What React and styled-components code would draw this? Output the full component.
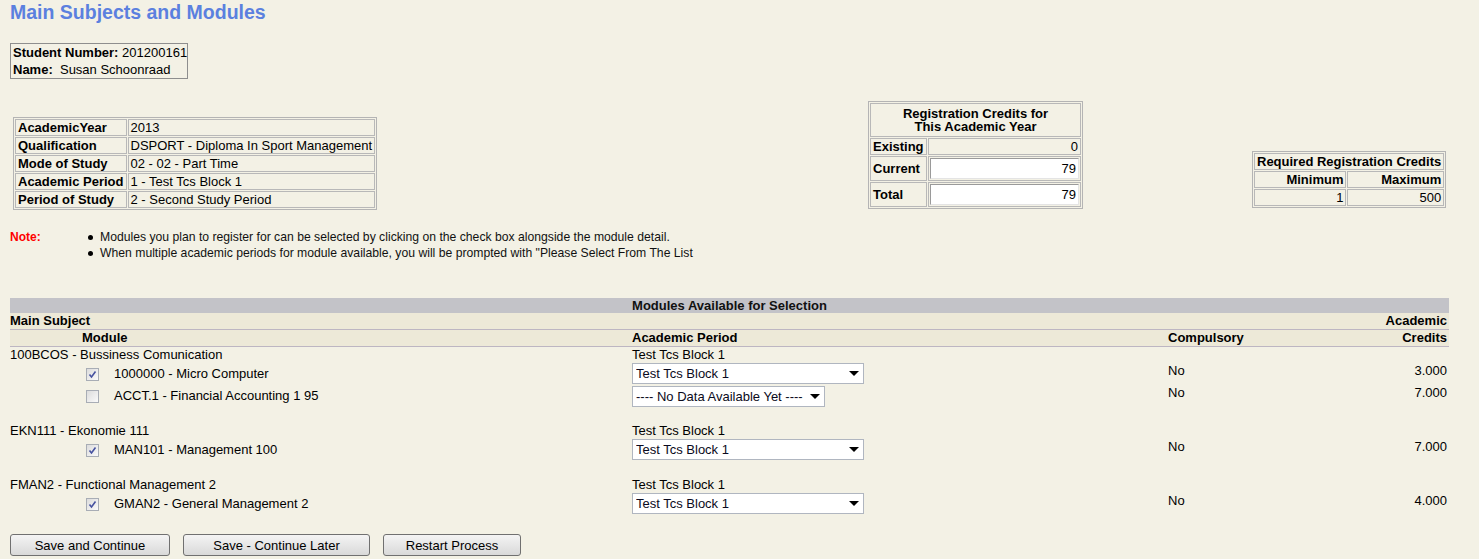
import React from 'react';
import styled, { createGlobalStyle } from 'styled-components';

/* ─── Data ──────────────────────────────────────────────────────────── */

const INFO = [
  ['AcademicYear', '2013'],
  ['Qualification', 'DSPORT - Diploma In Sport Management'],
  ['Mode of Study', '02 - 02 - Part Time'],
  ['Academic Period', '1 - Test Tcs Block 1'],
  ['Period of Study', '2 - Second Study Period'],
];

const NOTES = [
  'Modules you plan to register for can be selected by clicking on the check box alongside the module detail.',
  'When multiple academic periods for module available, you will be prompted with "Please Select From The List',
];

const SUBJECTS = [
  {
    name: '100BCOS - Bussiness Comunication',
    period: 'Test Tcs Block 1',
    modules: [
      { name: '1000000 - Micro Computer', checked: true, option: 'Test Tcs Block 1', width: 232, credits: '3.000' },
      { name: 'ACCT.1 - Financial Accounting 1 95', checked: false, option: '---- No Data Available Yet ----', width: 193, credits: '7.000' },
    ],
  },
  {
    name: 'EKN111 - Ekonomie 111',
    period: 'Test Tcs Block 1',
    modules: [
      { name: 'MAN101 - Management 100', checked: true, option: 'Test Tcs Block 1', width: 232, credits: '7.000' },
    ],
  },
  {
    name: 'FMAN2 - Functional Management 2',
    period: 'Test Tcs Block 1',
    modules: [
      { name: 'GMAN2 - General Management 2', checked: true, option: 'Test Tcs Block 1', width: 232, credits: '4.000' },
    ],
  },
];

const BUTTONS = [
  { label: 'Save and Continue', width: 160 },
  { label: 'Save - Continue Later', width: 187 },
  { label: 'Restart Process', width: 138 },
];

/* ─── Styled components ──────────────────────────────────────────────── */

const GlobalStyle = createGlobalStyle`
  html, body {
    margin: 0;
    padding: 0;
    background: #F3F1E5;
  }
  body {
    font-family: "Liberation Sans", Arial, sans-serif;
    font-size: 13px;
    color: #000;
  }
`;

const Page = styled.div`
  width: 1479px;
  height: 559px;
  overflow: hidden;
  padding-left: 10px;
  box-sizing: border-box;
`;

const Title = styled.h1`
  margin: 0;
  padding-top: 1px;
  font-size: 19.5px;
  line-height: 22px;
  font-weight: bold;
  color: #5B80DF;
`;

const StudentBox = styled.div`
  margin-top: 20px;
  width: 178px;
  box-sizing: border-box;
  border: 1px solid #8E8E8E;
  padding: 0 2px;
  line-height: 17px;
  white-space: nowrap;
`;

const Bold = styled.b`
  font-weight: bold;
`;

const TopRow = styled.div`
  margin-top: 22px;
  display: grid;
  grid-template-columns: 858px 384px auto;
  align-items: start;
`;

const GridTable = styled.table`
  border-collapse: separate;
  border-spacing: 1px;
  border: 1px solid #B4B4B4;
  margin-top: ${p => p.top || 0}px;
  margin-left: ${p => p.left || 0}px;
  width: ${p => p.width}px;
  font-size: 13px;

  td, th {
    border: 1px solid #B8B8B8;
    padding: 0 2px;
    line-height: 15px;
    white-space: nowrap;
  }
`;

const LabelCell = styled.td`
  font-weight: bold;
  width: ${p => p.width || 'auto'};
`;

const HeadCell = styled.th`
  font-weight: bold;
  text-align: ${p => p.align || 'center'};
  && {
    line-height: ${p => p.lh || 15}px;
    padding: ${p => p.pad || '0 2px'};
  }
`;

const NumCell = styled.td`
  text-align: right;
  && {
    padding: ${p => p.pad || '0 2px'};
  }
`;

const CreditInput = styled.input`
  display: block;
  width: 100%;
  height: 21px;
  box-sizing: border-box;
  border: 1px solid;
  border-color: #9A9A9A #E4E4E4 #E4E4E4 #9A9A9A;
  background: #fff;
  font-family: "Liberation Sans", Arial, sans-serif;
  font-size: 13px;
  text-align: right;
  padding: 0 2px;
  color: #000;
`;

const NoteBlock = styled.div`
  margin-top: 19px;
  display: grid;
  grid-template-columns: 78px auto;
  font-size: 12.2px;
  line-height: 16px;
`;

const NoteLabel = styled.span`
  color: #FF0000;
  font-weight: bold;
  font-size: 12px;
`;

const NoteList = styled.ul`
  margin: 0;
  padding: 0;
  list-style: none;
`;

const NoteItem = styled.li`
  display: flex;
  align-items: center;
  color: #111;

  &::before {
    content: '';
    width: 5px;
    height: 5px;
    border-radius: 50%;
    background: #000;
    margin-right: 7px;
  }
`;

const ModulesTable = styled.div`
  margin-top: 37px;
  width: 1439px;
`;

const HeaderBar = styled.div`
  height: 15px;
  line-height: 15px;
  background: #C3C3C8;
  text-align: center;
  font-weight: bold;
  color: #111;
`;

const Row = styled.div`
  display: grid;
  grid-template-columns: 622px 536px 1fr 150px;
  align-items: ${p => p.align || 'center'};
  height: ${p => p.h}px;
  line-height: 16px;
  ${p => p.head && `
    background: #EDE9D8;
    border-bottom: 1px solid #BDB6C2;
    font-weight: bold;
  `}
  margin-top: ${p => p.gap || 0}px;
`;

const Cell = styled.div`
  padding-left: ${p => p.indent || 0}px;
  padding-right: ${p => (p.right ? 2 : 0)}px;
  text-align: ${p => (p.right ? 'right' : 'left')};
  white-space: nowrap;
`;

const ModuleCell = styled.div`
  display: flex;
  align-items: center;
  height: 22px;
  padding-left: 76px;
  white-space: nowrap;
`;

const CheckBox = styled.span`
  width: 13px;
  height: 13px;
  flex-shrink: 0;
  box-sizing: border-box;
  border: 1px solid #A8ADB5;
  background: linear-gradient(135deg, #DCDCDC, #FAFAFA);
  margin-right: 15px;
  display: flex;
  align-items: center;
  justify-content: center;
`;

const SelectWrap = styled.div`
  position: relative;
  width: ${p => p.width}px;
  height: 21px;
  margin-top: ${p => p.top || 0}px;

  &::after {
    content: '';
    position: absolute;
    right: 5px;
    top: 8px;
    border-left: 5px solid transparent;
    border-right: 5px solid transparent;
    border-top: 5px solid #000;
    pointer-events: none;
  }
`;

const Select = styled.select`
  appearance: none;
  -webkit-appearance: none;
  width: 100%;
  height: 100%;
  box-sizing: border-box;
  border: 1px solid #B0B6C0;
  border-radius: 0;
  background: #fff;
  font-family: "Liberation Sans", Arial, sans-serif;
  font-size: 13px;
  color: #0A0A20;
  padding: 0 0 0 3px;
`;

const ButtonRow = styled.div`
  margin-top: 19px;
  display: flex;
  gap: 13px;
`;

const Button = styled.button`
  width: ${p => p.width}px;
  height: 22px;
  border: 1px solid #707070;
  border-radius: 3px;
  background: linear-gradient(#F4F4F4, #D9D9D9);
  font-family: "Liberation Sans", Arial, sans-serif;
  font-size: 13px;
  color: #000;
  padding: 0;
`;

/* ─── Component ─────────────────────────────────────────────────────── */

const Check = () => (
  <svg width="9" height="9" viewBox="0 0 9 9">
    <path d="M1.5 4.5 L3.5 7 L7.5 1.5" fill="none" stroke="#4652A0" strokeWidth="1.6" />
  </svg>
);

const App = () => (
  <Page>
    <GlobalStyle />
    <Title>Main Subjects and Modules</Title>

    <StudentBox>
      <div><Bold>Student Number:</Bold> 201200161</div>
      <div><Bold>Name:</Bold>&nbsp; Susan Schoonraad</div>
    </StudentBox>

    <TopRow>
      <GridTable width={363} top={16} left={3}>
        <tbody>
          {INFO.map(([k, v]) => (
            <tr key={k}>
              <LabelCell width="108px">{k}</LabelCell>
              <td>{v}</td>
            </tr>
          ))}
        </tbody>
      </GridTable>

      <GridTable width={215}>
        <tbody>
          <tr>
            <HeadCell colSpan={2} lh={13} pad="3px 2px">
              Registration Credits for<br />This Academic Year
            </HeadCell>
          </tr>
          <tr>
            <LabelCell width="50px">Existing</LabelCell>
            <NumCell>0</NumCell>
          </tr>
          <tr>
            <LabelCell>Current</LabelCell>
            <NumCell pad="1px 1px"><CreditInput readOnly value="79" /></NumCell>
          </tr>
          <tr>
            <LabelCell>Total</LabelCell>
            <NumCell pad="1px 1px"><CreditInput readOnly value="79" /></NumCell>
          </tr>
        </tbody>
      </GridTable>

      <GridTable width={193} top={50}>
        <tbody>
          <tr>
            <HeadCell colSpan={2}>Required Registration Credits</HeadCell>
          </tr>
          <tr>
            <HeadCell align="right">Minimum</HeadCell>
            <HeadCell align="right">Maximum</HeadCell>
          </tr>
          <tr>
            <NumCell>1</NumCell>
            <NumCell>500</NumCell>
          </tr>
        </tbody>
      </GridTable>
    </TopRow>

    <NoteBlock>
      <NoteLabel>Note:</NoteLabel>
      <NoteList>
        {NOTES.map(n => <NoteItem key={n}>{n}</NoteItem>)}
      </NoteList>
    </NoteBlock>

    <ModulesTable>
      <HeaderBar>Modules Available for Selection</HeaderBar>
      <Row head h={16}>
        <Cell>Main Subject</Cell>
        <Cell />
        <Cell />
        <Cell right>Academic</Cell>
      </Row>
      <Row head h={16}>
        <Cell indent={72}>Module</Cell>
        <Cell>Academic Period</Cell>
        <Cell>Compulsory</Cell>
        <Cell right>Credits</Cell>
      </Row>

      {SUBJECTS.map((s, i) => (
        <React.Fragment key={s.name}>
          <Row h={16} gap={i === 0 ? 0 : 16}>
            <Cell>{s.name}</Cell>
            <Cell>{s.period}</Cell>
            <Cell />
            <Cell />
          </Row>
          {s.modules.map((m, j) => (
            <Row key={m.name} h={22} align="start">
              <ModuleCell>
                <CheckBox>{m.checked && <Check />}</CheckBox>
                {m.name}
              </ModuleCell>
              <SelectWrap width={m.width} top={j > 0 ? 1 : 0}>
                <Select defaultValue={m.option}>
                  <option>{m.option}</option>
                </Select>
              </SelectWrap>
              <Cell>No</Cell>
              <Cell right>{m.credits}</Cell>
            </Row>
          ))}
        </React.Fragment>
      ))}
    </ModulesTable>

    <ButtonRow>
      {BUTTONS.map(b => (
        <Button key={b.label} width={b.width}>{b.label}</Button>
      ))}
    </ButtonRow>
  </Page>
);

export default App;
